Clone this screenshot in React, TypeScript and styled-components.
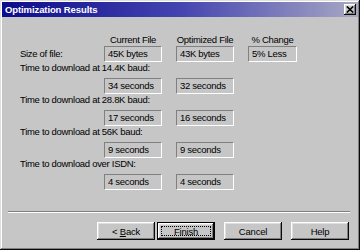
import React from "react";
import styled, { createGlobalStyle, css } from "styled-components";

const Global = createGlobalStyle`
  html, body {
    margin: 0;
    padding: 0;
    background: #c6c6c6;
  }
  body {
    font-family: "Liberation Sans", Arial, sans-serif;
    font-size: 9.5px;
    color: #000;
  }
`

const Window = styled.div`
  box-sizing: border-box;
  width: 360px;
  height: 250px;
  padding: 2px;
  background: #c6c6c6;
  box-shadow: inset -1px -1px #0a0a0a, inset 1px 1px #dfdfdf,
    inset -2px -2px #808080, inset 2px 2px #fff;
  display: flex;
  flex-direction: column;
`

const TitleBar = styled.div`
  height: 15px;
  display: flex;
  align-items: center;
  justify-content: space-between;
  padding: 0 2px 0 3px;
  background: linear-gradient(90deg, #0c0c8c 0%, #4444b0 50%, #a8a8c4 100%);
`

const Title = styled.span`
  color: #fff;
  font-weight: bold;
  font-size: 9.5px;
  letter-spacing: -0.1px;
`

const CloseButton = styled.button`
  box-sizing: border-box;
  width: 12px;
  height: 11px;
  padding: 0;
  border: none;
  background: #c6c6c6;
  display: flex;
  align-items: center;
  justify-content: center;
  box-shadow: inset -1px -1px #0a0a0a, inset 1px 1px #fff,
    inset -2px -2px #808080, inset 2px 2px #dfdfdf;
`

const Grid = styled.div`
  display: grid;
  grid-template-columns: 70px 58px 58px 49px;
  grid-template-rows: 12px;
  grid-auto-rows: 16px;
  column-gap: 14px;
  margin: 17px 0 0 18px;
  letter-spacing: -0.3px;
`

const HeaderCell = styled.div<{ $col: number }>`
  grid-column: ${(p) => p.$col};
  text-align: center;
  line-height: 12px;
  white-space: nowrap;
`

const Label = styled.div`
  align-self: center;
  line-height: 12px;
  white-space: nowrap;
`

const RowLabel = styled.div`
  grid-column: 1 / -1;
  line-height: 12px;
  white-space: nowrap;
`

const Field = styled.div<{ $col: number }>`
  grid-column: ${(p) => p.$col};
  box-sizing: border-box;
  height: 16px;
  padding-left: 3px;
  line-height: 14px;
  border: 1px solid;
  border-color: #808080 #fff #fff #808080;
  white-space: nowrap;
`

const Separator = styled.div`
  margin: 21px 8px 0 6px;
  border-top: 1px solid #808080;
  border-bottom: 1px solid #fff;
`

const ButtonRow = styled.div`
  display: flex;
  justify-content: flex-end;
  margin-top: 9px;
  padding-right: 9px;
`

const Button = styled.button<{ $gap: number; $default?: boolean }>`
  box-sizing: border-box;
  width: 58px;
  height: 18px;
  margin-left: ${(p) => p.$gap}px;
  padding: 0;
  border: none;
  background: #c6c6c6;
  font-family: inherit;
  font-size: 9.5px;
  letter-spacing: -0.2px;
  color: #000;
  display: flex;
  align-items: stretch;
  box-shadow: inset -1px -1px #0a0a0a, inset 1px 1px #fff,
    inset -2px -2px #808080, inset 2px 2px #dfdfdf;
  ${(p) =>
    p.$default &&
    css`
      box-shadow: inset 0 0 0 1px #000, inset -2px -2px #0a0a0a,
        inset 2px 2px #fff, inset -3px -3px #808080, inset 3px 3px #dfdfdf;
    `}
`

const Caption = styled.span<{ $focus?: boolean }>`
  flex: 1;
  display: flex;
  align-items: center;
  justify-content: center;
  margin: 4px;
  border: 1px dotted ${(p) => (p.$focus ? "#000" : "transparent")};
`

const rows = [
  { label: "Time to download at 14.4K baud:", current: "34 seconds", optimized: "32 seconds" },
  { label: "Time to download at 28.8K baud:", current: "17 seconds", optimized: "16 seconds" },
  { label: "Time to download at 56K baud:", current: "9 seconds", optimized: "9 seconds" },
  { label: "Time to download over ISDN:", current: "4 seconds", optimized: "4 seconds" },
]

export default function App() {
  return (
    <>
      <Global />
      <Window>
        <TitleBar>
          <Title>Optimization Results</Title>
          <CloseButton aria-label="Close">
            <svg width="8" height="7" viewBox="0 0 8 7">
              <path d="M0.8 0.5 L7.2 6.5 M7.2 0.5 L0.8 6.5" stroke="#000" strokeWidth="1.6" />
            </svg>
          </CloseButton>
        </TitleBar>

        <Grid>
          <HeaderCell $col={2}>Current File</HeaderCell>
          <HeaderCell $col={3}>Optimized File</HeaderCell>
          <HeaderCell $col={4}>% Change</HeaderCell>

          <Label>Size of file:</Label>
          <Field $col={2}>45K bytes</Field>
          <Field $col={3}>43K bytes</Field>
          <Field $col={4}>5% Less</Field>

          {rows.map((r) => (
            <React.Fragment key={r.label}>
              <RowLabel>{r.label}</RowLabel>
              <Field $col={2}>{r.current}</Field>
              <Field $col={3}>{r.optimized}</Field>
            </React.Fragment>
          ))}
        </Grid>

        <Separator />

        <ButtonRow>
          <Button $gap={0}>
            <Caption>
              &lt;&nbsp;<u>B</u>ack
            </Caption>
          </Button>
          <Button $gap={2} $default>
            <Caption $focus>Finish</Caption>
          </Button>
          <Button $gap={9}>
            <Caption>Cancel</Caption>
          </Button>
          <Button $gap={9}>
            <Caption>Help</Caption>
          </Button>
        </ButtonRow>
      </Window>
    </>
  )
}
